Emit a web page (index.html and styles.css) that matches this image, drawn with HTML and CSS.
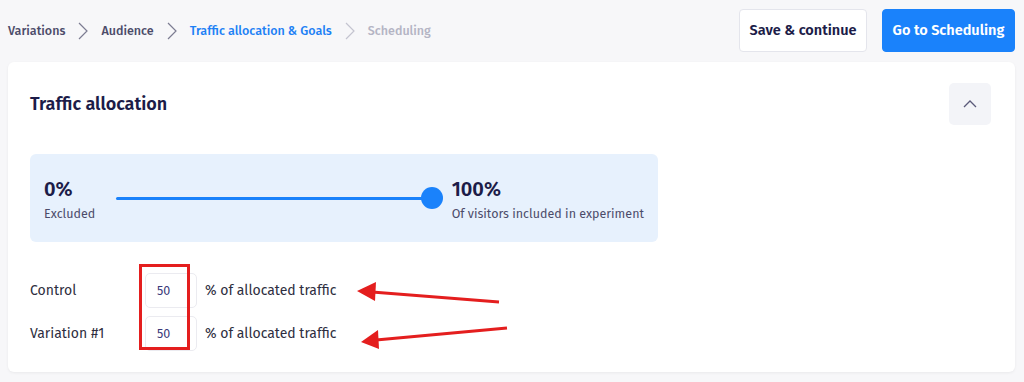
FILE: index.html
```html
<!DOCTYPE html>
<html lang="en">
<head>
  <meta charset="UTF-8">
  <title>Traffic allocation & Goals</title>
  <link rel="stylesheet" href="styles.css">
</head>
<body>
  <header class="topbar">
    <nav class="crumbs">
      <span class="crumb">Variations</span>
      <svg class="sep" width="12" height="18" viewBox="0 0 12 18"><path d="M2 1 L10 9 L2 17" fill="none" stroke="#7c7c92" stroke-width="1.2"/></svg>
      <span class="crumb">Audience</span>
      <svg class="sep" width="12" height="18" viewBox="0 0 12 18"><path d="M2 1 L10 9 L2 17" fill="none" stroke="#7c7c92" stroke-width="1.2"/></svg>
      <span class="crumb active">Traffic allocation &amp; Goals</span>
      <svg class="sep" width="12" height="18" viewBox="0 0 12 18"><path d="M2 1 L10 9 L2 17" fill="none" stroke="#c4c4d0" stroke-width="1.2"/></svg>
      <span class="crumb muted">Scheduling</span>
    </nav>
    <div class="actions">
      <button class="btn btn-light">Save &amp; continue</button>
      <button class="btn btn-primary">Go to Scheduling</button>
    </div>
  </header>

  <main class="card">
    <div class="card-head">
      <h2>Traffic allocation</h2>
      <button class="collapse">
        <svg width="16" height="10" viewBox="0 0 16 10"><path d="M2 8 L8 2 L14 8" fill="none" stroke="#5a5a7a" stroke-width="1.3"/></svg>
      </button>
    </div>

    <div class="range-box">
      <div class="stat">
        <div class="pct">0%</div>
        <div class="label">Excluded</div>
      </div>
      <div class="track">
        <div class="thumb"></div>
      </div>
      <div class="stat">
        <div class="pct">100%</div>
        <div class="label">Of visitors included in experiment</div>
      </div>
    </div>

    <div class="rows">
      <div class="row">
        <span class="name">Control</span>
        <input class="num" type="text" value="50">
        <span class="unit">% of allocated traffic</span>
      </div>
      <div class="row">
        <span class="name">Variation #1</span>
        <input class="num" type="text" value="50">
        <span class="unit">% of allocated traffic</span>
      </div>
    </div>

    <svg class="marks" width="1024" height="382" viewBox="0 0 1024 382">
      <rect x="140.5" y="265.5" width="48" height="83" fill="none" stroke="#e41e1e" stroke-width="3"/>
      <line x1="499" y1="302" x2="372" y2="292" stroke="#e41e1e" stroke-width="3"/>
      <polygon points="357,291 376,282 375,301" fill="#e41e1e"/>
      <line x1="507" y1="328" x2="376" y2="340" stroke="#e41e1e" stroke-width="3"/>
      <polygon points="361,342 378,330 379,349" fill="#e41e1e"/>
    </svg>
  </main>
</body>
</html>
```

FILE: styles.css
```css
body {
  margin: 0;
  padding: 0 9px 0 8px;
  background-color: #f7f7f9;
  font-family: 'Fira Sans', 'Lato', 'Noto Sans', sans-serif;
  color: #1c1c48;
  height: 382px;
  overflow: hidden;
}
.topbar {
  display: flex;
  align-items: center;
  justify-content: space-between;
  height: 62px;
  padding-bottom: 2px;
  box-sizing: border-box;
}
.crumbs {
  display: flex;
  align-items: center;
  gap: 12px;
  font-size: 12.5px;
  font-weight: 500;
  padding-top: 1px;
}
.crumb {
  color: #4c4c6a;
}
.crumb.active {
  color: #1c80f5;
}
.crumb.muted {
  color: #b4b4c4;
}
.sep {
  display: block;
}
.actions {
  display: flex;
  gap: 15px;
}
.btn {
  height: 43px;
  padding: 0;
  border-radius: 4px;
  font-family: inherit;
  font-size: 14.5px;
  font-weight: 600;
  cursor: pointer;
  white-space: nowrap;
}
.btn-light {
  background-color: white;
  color: #1c1c48;
  border: 1px solid #e4e5ec;
  width: 128px;
}
.btn-primary {
  background-color: #1a82fb;
  color: white;
  border: 1px solid #1a82fb;
  width: 133px;
}
.card {
  background-color: white;
  border-radius: 6px;
  box-shadow: 0 1px 3px rgba(0,0,0,0.06);
  height: 310px;
  padding: 21px 22px 0 22px;
  box-sizing: border-box;
}
.card-head {
  display: flex;
  align-items: center;
  justify-content: space-between;
}
.card-head h2 {
  margin: 0;
  font-size: 18px;
  font-weight: 600;
  color: #1c1c48;
}
.collapse {
  width: 42px;
  height: 42px;
  border: none;
  border-radius: 5px;
  background-color: #f3f4f8;
  display: flex;
  align-items: center;
  justify-content: center;
  margin-right: 2px;
}
.range-box {
  margin-top: 29px;
  width: 628px;
  height: 88px;
  background-color: #e7f1fd;
  border-radius: 6px;
  display: flex;
  align-items: center;
  padding: 0 14px;
  box-sizing: border-box;
}
.stat {
  white-space: nowrap;
}
.stat .pct {
  font-size: 20px;
  font-weight: 600;
  color: #1c1c48;
  line-height: 24px;
  margin-top: 1px;
}
.stat .label {
  font-size: 12.5px;
  color: #4c4c6a;
  margin-top: 5px;
}
.stat:first-child {
  width: 72px;
}
.track {
  position: relative;
  width: 317px;
  height: 3px;
  background-color: #1a82fb;
  margin: 0 20px 0 0;
  border-radius: 2px;
}
.thumb {
  position: absolute;
  right: -11px;
  top: -10px;
  width: 22px;
  height: 22px;
  border-radius: 50%;
  background-color: #1a82fb;
}
.rows {
  margin-top: 31px;
  display: flex;
  flex-direction: column;
  gap: 8px;
}
.row {
  display: flex;
  align-items: center;
  font-size: 14px;
  color: #2e2e40;
}
.name {
  width: 115px;
}
.num {
  width: 52px;
  height: 35px;
  box-sizing: border-box;
  border: 1px solid #ebebf0;
  border-radius: 5px;
  padding: 0 0 0 11px;
  font-family: inherit;
  font-size: 12.5px;
  color: #3a3a7a;
  margin-right: 8px;
}
.marks {
  position: absolute;
  left: 0;
  top: 0;
  pointer-events: none;
}
```
